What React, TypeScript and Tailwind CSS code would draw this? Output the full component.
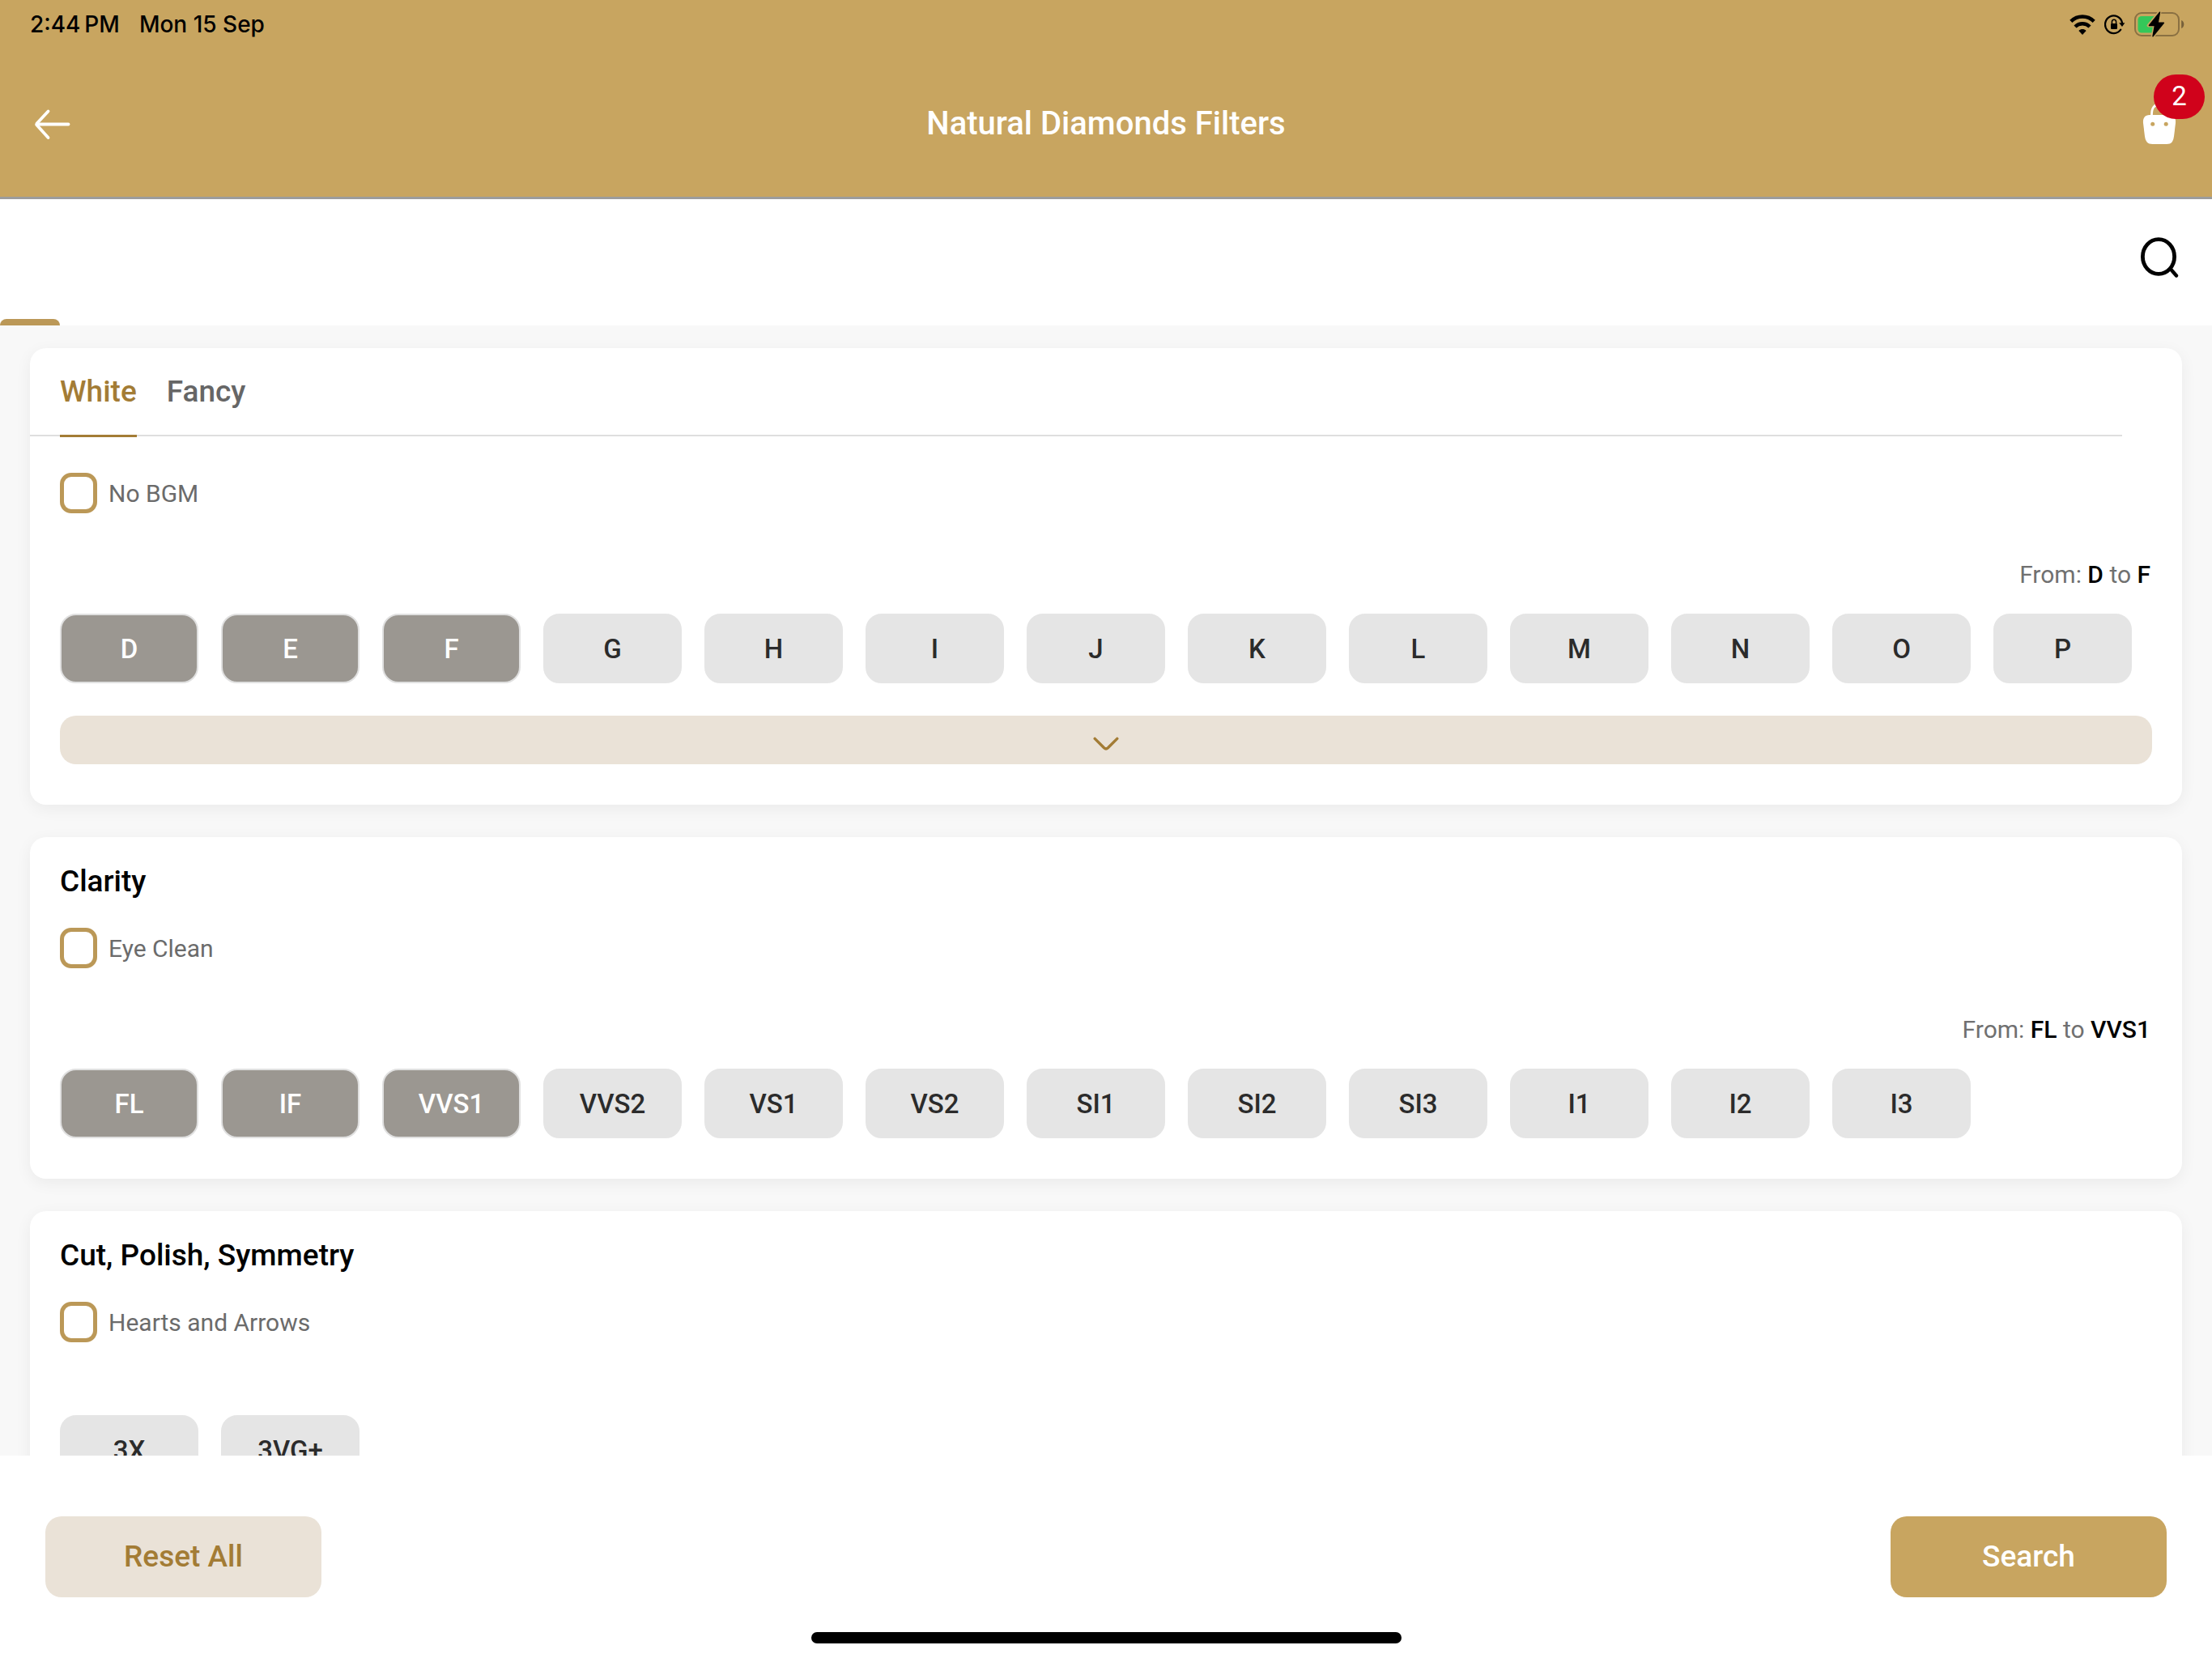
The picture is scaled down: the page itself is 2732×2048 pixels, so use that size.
import React, { useState } from "react";

const COLOR_GRADES = ["D", "E", "F", "G", "H", "I", "J", "K", "L", "M", "N", "O", "P"];
const CLARITY_GRADES = ["FL", "IF", "VVS1", "VVS2", "VS1", "VS2", "SI1", "SI2", "SI3", "I1", "I2", "I3"];
const CUT_GRADES = ["3X", "3VG+"];

function WifiIcon() {
  return (
    <svg className="h-[25px] w-8" viewBox="0 0 32 25" fill="none" aria-hidden="true">
      <path d="M1.8 8.4C9.8 0.6 22.2 0.6 30.2 8.4" stroke="#000" strokeWidth="4.4" />
      <path d="M7 15C12 10 20 10 25 15" stroke="#000" strokeWidth="4.4" />
      <path d="M16 25L11.4 20C14 17.4 18 17.4 20.6 20Z" fill="#000" />
    </svg>
  );
}

function RotationLockIcon() {
  return (
    <svg className="h-[26px] w-[26px]" viewBox="0 0 26 26" fill="none" aria-hidden="true">
      <path d="M20.2 19.6A10.6 10.8 0 1 1 22 11" stroke="#000" strokeWidth="2.3" strokeLinecap="round" />
      <path d="M18.2 11.2H25.4L22 16Z" fill="#000" />
      <rect x="8" y="12" width="8" height="7" rx="1.2" fill="#000" />
      <path d="M9.4 12.4V10a2.6 2.8 0 0 1 5.2 0V12.4" stroke="#000" strokeWidth="1.5" />
    </svg>
  );
}

function BatteryIcon() {
  return (
    <svg className="h-8 w-[62px]" viewBox="0 0 62 32" fill="none" aria-hidden="true">
      <rect x="1" y="2" width="54" height="28" rx="8" stroke="#8a7042" strokeWidth="2" />
      <path d="M58.2 11C62.4 12.4 62.4 19.6 58.2 21Z" fill="#76603a" />
      <rect x="4.5" y="6" width="24" height="20.5" rx="4.5" fill="#34c759" />
      <path d="M31.5 0.6L17.6 17.5H25.4L22.5 31.4L36.8 14.2H29.2Z" fill="#000" stroke="#c8a560" strokeWidth="4" strokeLinejoin="round" />
      <path d="M31.5 1.2L18.4 17.5H25.4L23 30.8L36.4 14.2H29.2Z" fill="#000" stroke="#000" strokeWidth="1.4" strokeLinejoin="round" />
    </svg>
  );
}

function ArrowLeftIcon() {
  return (
    <svg className="h-10 w-12" viewBox="0 1 48 40" fill="none" stroke="#fff" strokeWidth="3.8" strokeLinecap="round" strokeLinejoin="round" aria-hidden="true">
      <path d="M19.5 5.5L5.5 20.5Q4.8 21.6 5.5 22.5L19.5 38" />
      <path d="M6 21.5H44.5" />
    </svg>
  );
}

function BagIcon() {
  return (
    <svg className="h-[52px] w-[42px]" viewBox="0 0 42 52" fill="none" aria-hidden="true">
      <path d="M11.5 16V14.5C11.5 6 15 2 21 2S30.5 6 30.5 14.5V16" stroke="#fff" strokeWidth="2.8" />
      <path d="M9 15H33C39 15 41.6 19 41 25L39 41.5C38 48 36 51 30 51H12.5C6.5 51 4 48 3 41.5L1 25C0.4 19 3 15 9 15Z" fill="#fff" />
      <circle cx="12.7" cy="26.3" r="2.5" fill="#c8a560" />
      <circle cx="29.2" cy="26.3" r="2.5" fill="#c8a560" />
    </svg>
  );
}

function SearchIcon() {
  return (
    <svg className="h-[52px] w-12" viewBox="0 0 48 52" fill="none" stroke="#000" strokeLinecap="round" aria-hidden="true">
      <ellipse cx="23" cy="25" rx="19.6" ry="21.4" strokeWidth="4.8" />
      <path d="M38 40.5L45 48.5" strokeWidth="4.4" />
    </svg>
  );
}

function ChevronDownIcon() {
  return (
    <svg className="h-7 w-9" viewBox="0 0 36 28" fill="none" stroke="#a37c35" strokeWidth="3.4" strokeLinecap="round" strokeLinejoin="round" aria-hidden="true">
      <path d="M4.2 12.4L15.6 23.8Q18 26 20.4 23.8L31.8 12.4" />
    </svg>
  );
}

function Card({ label, children }: { label: string; children: React.ReactNode }) {
  return (
    <section aria-label={label} className="rounded-[20px] bg-white px-[37px] pb-[50px] shadow-[0_5px_20px_rgba(0,0,0,0.06)]">
      {children}
    </section>
  );
}

function CheckOption({ id, label }: { id: string; label: string }) {
  return (
    <div className="flex items-center gap-[14px]">
      <input
        id={id}
        type="checkbox"
        className="h-[50px] w-[46px] shrink-0 appearance-none rounded-[14px] border-[5px] border-[#bb9857] bg-white checked:bg-[#bb9857]"
      />
      <label htmlFor={id} className="pt-0.5 text-[30px] leading-9 text-[#6b6b6b]">
        {label}
      </label>
    </div>
  );
}

function RangeSummary({ from, to }: { from: string; to: string }) {
  return (
    <p className="mt-[58px] mb-[30px] pr-0.5 text-right text-[30px] leading-9 text-[#707070]">
      From: <span className="font-medium text-black">{from}</span> to{" "}
      <span className="font-medium text-black">{to}</span>
    </p>
  );
}

function ChipGroup({ label, options, initial }: { label: string; options: string[]; initial: string[] }) {
  const [selected, setSelected] = useState<string[]>(initial);
  const toggle = (option: string) =>
    setSelected((prev) => (prev.includes(option) ? prev.filter((o) => o !== option) : [...prev, option]));

  return (
    <div role="group" aria-label={label} className="flex flex-wrap gap-7">
      {options.map((option) => {
        const on = selected.includes(option);
        return (
          <button
            key={option}
            type="button"
            aria-pressed={on}
            onClick={() => toggle(option)}
            className={
              on
                ? "h-[86px] w-[171px] rounded-[20px] border-2 border-[#e0e0e0] bg-[#9b9791] pt-0.5 text-[33px] font-medium text-white"
                : "h-[86px] w-[171px] rounded-[20px] border-2 border-[#e5e5e5] bg-[#e5e5e5] pt-0.5 text-[33px] font-medium text-[#2b2b2b]"
            }
          >
            {option}
          </button>
        );
      })}
    </div>
  );
}

function SectionTitle({ children }: { children: React.ReactNode }) {
  return <h2 className="mb-8 pt-[30px] text-[37px] leading-[50px] font-medium text-black">{children}</h2>;
}

export default function App() {
  const [tab, setTab] = useState("White");

  return (
    <div className="flex h-screen flex-col overflow-hidden bg-white font-['Roboto',sans-serif]">
      <header className="border-b-[3px] border-[#9c9c9c] bg-[#c8a560]">
        <div className="flex h-[60px] items-center justify-between pr-[34px] pl-[37px] font-['Inter',sans-serif] text-[28px] font-medium text-black">
          <div className="flex gap-6">
            <span>2:44{"\u2009"}PM</span>
            <span>Mon 15 Sep</span>
          </div>
          <div className="flex items-center gap-[11px]">
            <WifiIcon />
            <RotationLockIcon />
            <BatteryIcon />
          </div>
        </div>
        <div className="grid h-[183px] grid-cols-3 items-center px-10 pt-0.5">
          <button type="button" aria-label="Back" className="justify-self-start">
            <ArrowLeftIcon />
          </button>
          <h1 className="text-center text-[40px] font-medium text-white">Natural Diamonds Filters</h1>
          <button type="button" aria-label="Shopping bag, 2 items" className="relative mr-1 justify-self-end">
            <BagIcon />
            <span className="absolute -top-[35px] left-[14px] flex h-[55px] w-[63px] items-center justify-center rounded-[28px] bg-[#d0021b] text-[33px] text-white">
              2
            </span>
          </button>
        </div>
      </header>

      <nav aria-label="Filter groups" className="flex flex-col">
        <div className="flex h-[148px] items-center justify-end pr-[41px] pb-1">
          <button type="button" aria-label="Search filters">
            <SearchIcon />
          </button>
        </div>
        <div className="h-2 w-[74px] rounded-t-lg bg-[#bb9857]" />
      </nav>

      <main className="flex min-h-0 flex-1 flex-col gap-10 overflow-hidden bg-[#f8f8f8] px-[37px] pt-7">
        <Card label="Color">
          <div role="tablist" className="-ml-[37px] mr-[37px] flex gap-[37px] border-b-2 border-[#dedede] pl-[37px]">
            {["White", "Fancy"].map((name) => (
              <button
                key={name}
                type="button"
                role="tab"
                aria-selected={tab === name}
                onClick={() => setTab(name)}
                className={
                  tab === name
                    ? "-mb-[3px] h-[110px] border-b-[3px] border-[#a37c35] text-[37px] font-medium text-[#a37c35]"
                    : "-mb-[3px] h-[110px] border-b-[3px] border-transparent text-[37px] font-medium text-[#666666]"
                }
              >
                {name}
              </button>
            ))}
          </div>
          <div className="pt-[45px]">
            <CheckOption id="no-bgm" label="No BGM" />
          </div>
          <RangeSummary from="D" to="F" />
          <ChipGroup label="Color grade" options={COLOR_GRADES} initial={["D", "E", "F"]} />
          <button
            type="button"
            aria-label="Show more"
            className="mt-10 flex h-[60px] w-full items-center justify-center rounded-[20px] bg-[#eae2d7]"
          >
            <ChevronDownIcon />
          </button>
        </Card>

        <Card label="Clarity">
          <SectionTitle>Clarity</SectionTitle>
          <CheckOption id="eye-clean" label="Eye Clean" />
          <RangeSummary from="FL" to="VVS1" />
          <ChipGroup label="Clarity grade" options={CLARITY_GRADES} initial={["FL", "IF", "VVS1"]} />
        </Card>

        <Card label="Cut, Polish, Symmetry">
          <SectionTitle>Cut, Polish, Symmetry</SectionTitle>
          <CheckOption id="hearts-arrows" label="Hearts and Arrows" />
          <div className="pt-[90px]">
            <ChipGroup label="Cut grade" options={CUT_GRADES} initial={[]} />
          </div>
        </Card>
      </main>

      <footer className="flex flex-col items-center bg-white pb-[18px]">
        <div className="flex w-full justify-between px-14 pt-[75px] pb-[43px]">
          <button type="button" className="h-[100px] w-[341px] rounded-[20px] bg-[#eae2d7] text-[37px] font-medium text-[#a37c35]">
            Reset All
          </button>
          <button type="button" className="h-[100px] w-[341px] rounded-[20px] bg-[#c8a560] text-[37px] font-medium text-white">
            Search
          </button>
        </div>
        <div className="h-[14px] w-[729px] rounded-full bg-black" />
      </footer>
    </div>
  );
}
